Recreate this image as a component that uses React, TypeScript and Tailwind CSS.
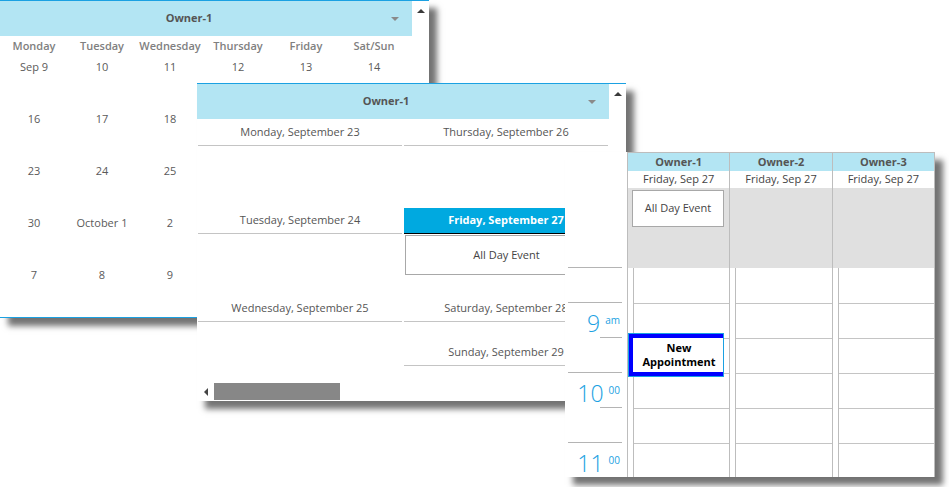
const weeks = [
  ['Sep 9', '10', '11', '12', '13', '14'],
  ['16', '17', '18', '', '', ''],
  ['23', '24', '25', '', '', ''],
  ['30', 'October 1', '2', '', '', ''],
  ['7', '8', '9', '', '', '']
]

const dayNames = ['Monday', 'Tuesday', 'Wednesday', 'Thursday', 'Friday', 'Sat/Sun']

function UpArrow() {
  return <div className="w-0 h-0 border-x-[4px] border-x-transparent border-b-[4px] border-b-[#3a3a3a]" />
}

function DownArrow() {
  return <div className="w-0 h-0 border-x-[4px] border-x-transparent border-t-[4px] border-t-[#8a8a8a]" />
}

function OwnerHeader() {
  return (
    <div className="h-[35px] bg-[#b3e5f3] flex items-center">
      <div className="flex-1 text-center font-bold text-[11px] text-[#555]">Owner-1</div>
      <div className="w-[34px] flex justify-center">
        <DownArrow />
      </div>
    </div>
  )
}

function DayHeader({ label }: { label: string }) {
  return (
    <div className="h-[26px] border-b border-[#c4c4c4] flex items-center justify-center text-[11px] text-[#555]">
      {label}
    </div>
  )
}

function MonthWindow() {
  return (
    <div className="absolute left-0 top-0 w-[429px] h-[318px] bg-white border-y border-[#1ba1e2] flex shadow-[8px_8px_6px_rgba(0,0,0,0.55)]">
      <div className="w-[412px] flex flex-col">
        <OwnerHeader />
        <div className="grid grid-cols-6 w-[408px] h-[20px] items-center text-center font-semibold text-[11px] text-[#808080]">
          {dayNames.map((d) => (
            <div key={d}>{d}</div>
          ))}
        </div>
        {weeks.map((w, i) => (
          <div key={i} className="grid grid-cols-6 w-[408px] h-[52px] text-center text-[11px] text-[#5a5a5a]">
            {w.map((d, j) => (
              <div key={j} className="h-[22px] leading-[22px]">{d}</div>
            ))}
          </div>
        ))}
      </div>
      <div className="flex-1 flex justify-center pt-[8px]">
        <UpArrow />
      </div>
    </div>
  )
}

function WeekWindow() {
  return (
    <div className="absolute left-[197px] top-[83px] w-[429px] h-[318px] bg-white border-t border-[#1ba1e2] flex shadow-[8px_8px_6px_rgba(0,0,0,0.55)]">
      <div className="w-[412px] flex flex-col">
        <OwnerHeader />
        <div className="h-[265px] pt-[1px] pl-[1px] grid grid-cols-[204px_204px] gap-x-[2px]">
          <div className="flex flex-col">
            <div className="h-[88px]"><DayHeader label="Monday, September 23" /></div>
            <div className="h-[88px]"><DayHeader label="Tuesday, September 24" /></div>
            <div className="h-[88px]"><DayHeader label="Wednesday, September 25" /></div>
          </div>
          <div className="flex flex-col">
            <div className="h-[88px]"><DayHeader label="Thursday, September 26" /></div>
            <div className="h-[88px]">
              <div className="h-[26px] bg-[#00a9e0] border-b border-black flex items-center justify-center text-[11px] font-bold text-white">
                Friday, September 27
              </div>
              <div className="mt-[1px] ml-[1px] h-[40px] border border-[#a8a8a8] flex items-center justify-center text-[11px] text-[#444]">
                All Day Event
              </div>
            </div>
            <div className="h-[44px]"><DayHeader label="Saturday, September 28" /></div>
            <div className="h-[44px]"><DayHeader label="Sunday, September 29" /></div>
          </div>
        </div>
        <div className="h-[17px] -mt-[1px] flex items-center">
          <div className="w-[17px] flex justify-center">
            <div className="w-0 h-0 border-y-[4px] border-y-transparent border-r-[4px] border-r-[#444]" />
          </div>
          <div className="w-[126px] h-full bg-[#878787]" />
        </div>
      </div>
      <div className="flex-1 flex justify-center pt-[8px]">
        <UpArrow />
      </div>
    </div>
  )
}

function HourLabel({ hour, sup }: { hour: string; sup: string }) {
  return (
    <div className="h-[34px] flex justify-end pr-[2px] pt-[9px] text-[#1ba1e2]">
      <span className="text-[23px] leading-[23px] font-light">{hour}</span>
      <span className="text-[10px] leading-[10px] ml-[5px] mt-[3px]">{sup}</span>
    </div>
  )
}

function DayWindow() {
  const owners = ['Owner-1', 'Owner-2', 'Owner-3']
  return (
    <div className="absolute left-[565px] top-[152px] w-[370px] h-[325px] bg-white flex shadow-[8px_8px_6px_rgba(0,0,0,0.55)]">
      {/* time ruler */}
      <div className="w-[62px] flex flex-col">
        <div className="h-[116px]" />
        <div className="h-[35px] ml-[3px] mr-[5px] border-t border-[#b4b4b4]" />
        <div className="ml-[3px] mr-[5px] border-t border-[#b4b4b4]">
          <HourLabel hour="9" sup="am" />
          <div className="h-[35px] w-[22px] ml-auto border-t border-[#b4b4b4]" />
        </div>
        <div className="ml-[3px] mr-[5px] border-t border-[#b4b4b4]">
          <HourLabel hour="10" sup="00" />
          <div className="h-[35px] w-[22px] ml-auto border-t border-[#b4b4b4]" />
        </div>
        <div className="ml-[3px] mr-[5px] border-t border-[#b4b4b4]">
          <HourLabel hour="11" sup="00" />
        </div>
      </div>

      {/* owner columns */}
      <div className="flex-1 border-t border-r border-[#bdbdbd] grid grid-cols-3">
        {owners.map((o, i) => (
          <div key={o} className="border-l border-[#bdbdbd] flex flex-col">
            <div className="h-[18px] bg-[#b3e5f3] flex items-center justify-center text-[11px] font-bold text-[#555]">
              {o}
            </div>
            <div className="h-[17px] flex items-center justify-center text-[11px] text-[#444]">
              Friday, Sep 27
            </div>
            <div className="h-[80px] bg-[#e0e0e0] pt-[2px] pl-[4px]">
              {i === 0 && (
                <div className="w-[92px] h-[37px] bg-white border border-[#a8a8a8] flex items-center justify-center text-[11px] text-[#444]">
                  All Day Event
                </div>
              )}
            </div>
            <div className="flex-1 pl-[5px] relative">
              <div className="h-full border-l border-[#bdbdbd] flex flex-col">
                <div className="h-[35px]" />
                <div className="h-[35px] border-t border-[#c4c4c4]" />
                <div className="h-[35px] border-t border-[#c4c4c4]" />
                <div className="h-[35px] border-t border-[#c4c4c4]" />
                <div className="h-[35px] border-t border-[#c4c4c4]" />
                <div className="flex-1 border-t border-[#c4c4c4]" />
              </div>
              {i === 0 && (
                <div className="absolute left-0 top-[65px] w-[96px] h-[44px] border border-[#1ba1e2] bg-white flex flex-col">
                  <div className="h-[4px] bg-[#0000ff]" />
                  <div className="flex-1 flex">
                    <div className="w-[4px] bg-[#0000ff]" />
                    <div className="flex-1 flex items-center justify-center text-center text-[11px] leading-[14px] font-bold text-black pl-[2px]">
                      New
                      <br />
                      Appointment
                    </div>
                  </div>
                  <div className="h-[4px] bg-[#0000ff]" />
                </div>
              )}
            </div>
          </div>
        ))}
      </div>
    </div>
  )
}

export default function App() {
  return (
    <div className="relative w-[949px] h-[487px] bg-white overflow-hidden font-['Open_Sans','Noto_Sans',sans-serif]">
      <MonthWindow />
      <WeekWindow />
      <DayWindow />
    </div>
  )
}
